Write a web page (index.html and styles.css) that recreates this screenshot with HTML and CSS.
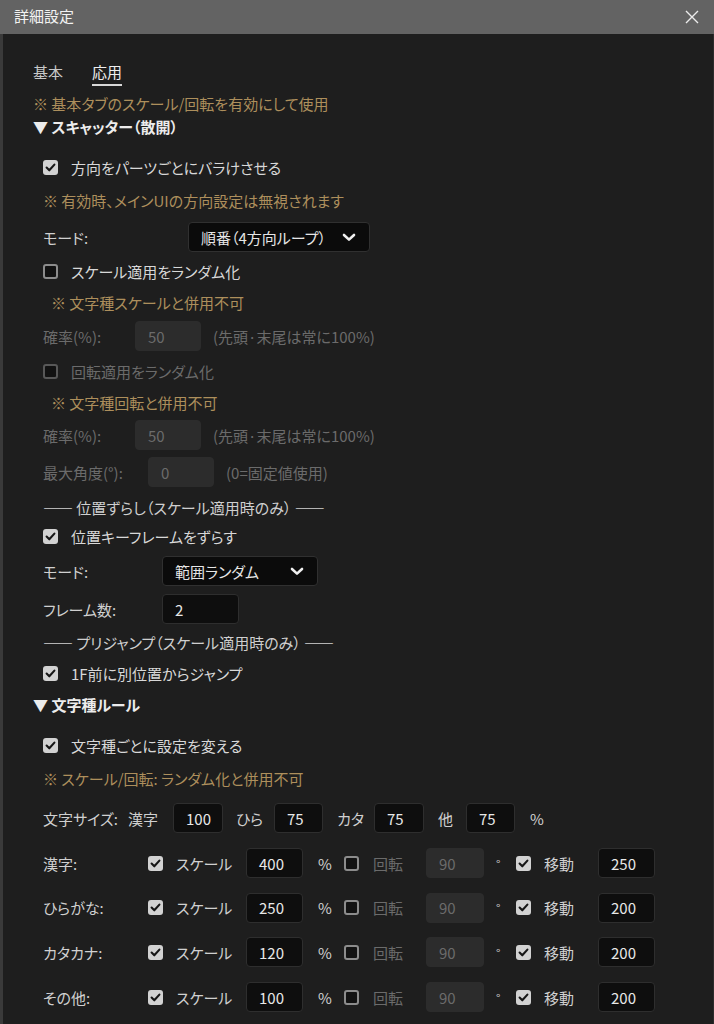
FILE: index.html
```html
<!DOCTYPE html>
<html lang="ja">
<head>
<meta charset="utf-8">
<title>詳細設定</title>
<link rel="stylesheet" href="styles.css">
</head>
<body>
<div class="window">
  <header class="titlebar">
    <span class="title">詳細設定</span>
    <span class="close" aria-label="閉じる">
      <svg width="16" height="16" viewBox="0 0 16 16"><path d="M2 2 L14 14 M14 2 L2 14" stroke="#ececec" stroke-width="1.4" fill="none"/></svg>
    </span>
  </header>
  <main class="content">
    <nav class="tabs">
      <span class="tab">基本</span>
      <span class="tab active">応用</span>
    </nav>
    <p class="note sp8">※ 基本タブのスケール/回転を有効にして使用</p>
    <h2 class="section sp3">▼ スキャッター（散開）</h2>

    <div class="group">
      <label class="row check sp20"><span class="cb on"><svg viewBox="0 0 15 15"><path d="M3.6 7.6 L6.3 10.3 L11.4 4.6"/></svg></span><span>方向をパーツごとにバラけさせる</span></label>
      <p class="note sp14">※ 有効時、メインUIの方向設定は無視されます</p>
      <div class="row field sp11">
        <span class="lab w145">モード:</span>
        <span class="select w182"><span>順番（4方向ループ）</span><svg width="14" height="9" viewBox="0 0 14 9"><path d="M2 2 L7 6.6 L12 2"/></svg></span>
      </div>
      <label class="row check sp9"><span class="cb"></span><span>スケール適用をランダム化</span></label>
      <p class="note sub sp12">※ 文字種スケールと併用不可</p>
      <div class="row field sp8 dis">
        <span class="lab w92">確率(%):</span>
        <span class="input off w66">50</span>
        <span class="hint">(先頭·末尾は常に100%)</span>
      </div>
      <label class="row check dis sp10"><span class="cb off"></span><span>回転適用をランダム化</span></label>
      <p class="note sub sp12">※ 文字種回転と併用不可</p>
      <div class="row field sp7 dis">
        <span class="lab w92">確率(%):</span>
        <span class="input off w66">50</span>
        <span class="hint">(先頭·末尾は常に100%)</span>
      </div>
      <div class="row field sp7 dis">
        <span class="lab w105">最大角度(°):</span>
        <span class="input off w66">0</span>
        <span class="hint">(0=固定値使用)</span>
      </div>
      <p class="row sep sp10">—— 位置ずらし（スケール適用時のみ） ——</p>
      <label class="row check sp9"><span class="cb on"><svg viewBox="0 0 15 15"><path d="M3.6 7.6 L6.3 10.3 L11.4 4.6"/></svg></span><span>位置キーフレームをずらす</span></label>
      <div class="row field sp10">
        <span class="lab w119">モード:</span>
        <span class="select w156"><span>範囲ランダム</span><svg width="14" height="9" viewBox="0 0 14 9"><path d="M2 2 L7 6.6 L12 2"/></svg></span>
      </div>
      <div class="row field sp8">
        <span class="lab w119">フレーム数:</span>
        <span class="input w77">2</span>
      </div>
      <p class="row sep sp8">—— プリジャンプ（スケール適用時のみ） ——</p>
      <label class="row check sp11"><span class="cb on"><svg viewBox="0 0 15 15"><path d="M3.6 7.6 L6.3 10.3 L11.4 4.6"/></svg></span><span>1F前に別位置からジャンプ</span></label>
    </div>

    <h2 class="section sp12">▼ 文字種ルール</h2>

    <div class="group">
      <label class="row check sp20"><span class="cb on"><svg viewBox="0 0 15 15"><path d="M3.6 7.6 L6.3 10.3 L11.4 4.6"/></svg></span><span>文字種ごとに設定を変える</span></label>
      <p class="note sp14">※ スケール/回転: ランダム化と併用不可</p>
      <div class="row field sizes sp14">
        <span class="lab w85">文字サイズ:</span>
        <span class="lab w45">漢字</span>
        <span class="input w50">100</span>
        <span class="lab pl13 w51">ひら</span>
        <span class="input w49">75</span>
        <span class="lab pl14 w51">カタ</span>
        <span class="input w50">75</span>
        <span class="lab pl14 w42">他</span>
        <span class="input w49">75</span>
        <span class="lab pl15">%</span>
      </div>

      <div class="table sp15">
        <span class="lab">漢字:</span>
        <span class="cb on"><svg viewBox="0 0 15 15"><path d="M3.6 7.6 L6.3 10.3 L11.4 4.6"/></svg></span>
        <span class="lab pl13">スケール</span>
        <span class="input">400</span>
        <span class="lab pl15">%</span>
        <span class="cb"></span>
        <span class="lab dim pl14">回転</span>
        <span class="input off">90</span>
        <span class="lab deg">°</span>
        <span class="cb on"><svg viewBox="0 0 15 15"><path d="M3.6 7.6 L6.3 10.3 L11.4 4.6"/></svg></span>
        <span class="lab pl13">移動</span>
        <span class="input">250</span>

        <span class="lab">ひらがな:</span>
        <span class="cb on"><svg viewBox="0 0 15 15"><path d="M3.6 7.6 L6.3 10.3 L11.4 4.6"/></svg></span>
        <span class="lab pl13">スケール</span>
        <span class="input">250</span>
        <span class="lab pl15">%</span>
        <span class="cb"></span>
        <span class="lab dim pl14">回転</span>
        <span class="input off">90</span>
        <span class="lab deg">°</span>
        <span class="cb on"><svg viewBox="0 0 15 15"><path d="M3.6 7.6 L6.3 10.3 L11.4 4.6"/></svg></span>
        <span class="lab pl13">移動</span>
        <span class="input">200</span>

        <span class="lab">カタカナ:</span>
        <span class="cb on"><svg viewBox="0 0 15 15"><path d="M3.6 7.6 L6.3 10.3 L11.4 4.6"/></svg></span>
        <span class="lab pl13">スケール</span>
        <span class="input">120</span>
        <span class="lab pl15">%</span>
        <span class="cb"></span>
        <span class="lab dim pl14">回転</span>
        <span class="input off">90</span>
        <span class="lab deg">°</span>
        <span class="cb on"><svg viewBox="0 0 15 15"><path d="M3.6 7.6 L6.3 10.3 L11.4 4.6"/></svg></span>
        <span class="lab pl13">移動</span>
        <span class="input">200</span>

        <span class="lab">その他:</span>
        <span class="cb on"><svg viewBox="0 0 15 15"><path d="M3.6 7.6 L6.3 10.3 L11.4 4.6"/></svg></span>
        <span class="lab pl13">スケール</span>
        <span class="input">100</span>
        <span class="lab pl15">%</span>
        <span class="cb"></span>
        <span class="lab dim pl14">回転</span>
        <span class="input off">90</span>
        <span class="lab deg">°</span>
        <span class="cb on"><svg viewBox="0 0 15 15"><path d="M3.6 7.6 L6.3 10.3 L11.4 4.6"/></svg></span>
        <span class="lab pl13">移動</span>
        <span class="input">200</span>
      </div>
    </div>
  </main>
</div>
</body>
</html>
```

FILE: styles.css
```css
* { box-sizing: border-box; }
html, body {
  margin: 0;
  padding: 0;
  background: #1e1e1e;
}
body {
  width: 714px;
  height: 1024px;
  overflow: hidden;
  font-family: "Noto Sans CJK JP", "Noto Sans", sans-serif;
  font-size: 15px;
  font-feature-settings: "palt";
  color: #d4d4d4;
}
.window {
  width: 714px;
  height: 1024px;
  display: flex;
  flex-direction: column;
  background: #1e1e1e;
}
.titlebar {
  height: 34px;
  flex: none;
  background: #636363;
  display: flex;
  align-items: center;
  justify-content: space-between;
  padding: 0 14px 0 14px;
}
.title {
  color: #f2f2f2;
  font-size: 15px;
  line-height: 34px;
  padding-bottom: 2px;
}
.close {
  display: flex;
  width: 16px;
  height: 16px;
  margin-right: 0;
}
.content {
  flex: 1;
  border-left: 3px solid #3a3a3a;
  border-right: 1px solid #2c2c2c;
  padding: 26px 0 0 30px;
  overflow: hidden;
}
.tabs {
  display: flex;
  gap: 29px;
  height: 26px;
}
.tab {
  height: 26px;
  line-height: 24px;
  color: #c8c8c8;
  border-bottom: 2px solid transparent;
}
.tab.active {
  color: #eeeeee;
  border-bottom-color: #d8d8d8;
}
p, h2 { margin: 0; }
.note {
  height: 20px;
  line-height: 20px;
  color: #ad8f5c;
}
.note.sub { padding-left: 8px; }
.section {
  height: 20px;
  line-height: 20px;
  font-size: 15px;
  font-weight: 700;
  color: #ececec;
}
.group { padding-left: 10px; }
.row {
  display: flex;
  align-items: center;
  height: 20px;
  white-space: nowrap;
}
.row.field { height: 30px; }
.check { gap: 13px; color: #d8d8d8; }
.check.dis { color: #6b6b6b; }
.dis .lab, .dis .hint { color: #6b6b6b; }
.sep { color: #cfcfcf; }

.cb {
  width: 15px;
  height: 15px;
  flex: none;
  border-radius: 3px;
  background: #121212;
  border: 2px solid #8c8c8c;
  display: block;
}
.cb.off { border-color: #585858; }
.cb.on {
  background: #d2d2d2;
  border: none;
}
.cb svg {
  display: block;
  width: 15px;
  height: 15px;
}
.cb svg path {
  fill: none;
  stroke: #161616;
  stroke-width: 2.1;
  stroke-linecap: round;
  stroke-linejoin: round;
}

.lab { flex: none; color: #d0d0d0; }
.lab.dim { color: #6b6b6b; }
.w42 { width: 42px; }
.w45 { width: 45px; }
.w51 { width: 51px; }
.w85 { width: 85px; }
.w92 { width: 92px; }
.w105 { width: 105px; }
.w119 { width: 119px; }
.w145 { width: 145px; }
.pl13 { padding-left: 13px; }
.pl14 { padding-left: 14px; }
.pl15 { padding-left: 15px; }

.select {
  height: 30px;
  background: #0b0b0b;
  border: 1px solid #303030;
  border-radius: 4px;
  display: flex;
  align-items: center;
  justify-content: space-between;
  padding: 0 13px 0 12px;
  color: #e6e6e6;
}
.select svg path {
  fill: none;
  stroke: #f0f0f0;
  stroke-width: 2.6;
  stroke-linecap: round;
  stroke-linejoin: round;
}
.w182 { width: 182px; }
.w156 { width: 156px; }

.input {
  height: 30px;
  flex: none;
  display: flex;
  align-items: center;
  padding-left: 12px;
  background: #0e0e0e;
  border: 1px solid #2e2e2e;
  border-radius: 4px;
  color: #e8e8e8;
}
.input.off {
  background: #2c2c2c;
  border-color: #2c2c2c;
  color: #6b6b6b;
}
.w49 { width: 49px; }
.w50 { width: 50px; }
.w66 { width: 66px; }
.w77 { width: 77px; }
.hint { margin-left: 12px; }

.table {
  display: grid;
  grid-template-columns: 105px 15px 83px 57px 41px 15px 67px 58px 32px 15px 67px 57px;
  grid-auto-rows: 30px;
  row-gap: 14.7px;
  align-items: center;
}
.table .lab, .table .input { white-space: nowrap; }
.deg { padding-left: 12px; color: #c8c8c8; font-size: 12px; }

.sp3 { margin-top: 3px; }
.sp7 { margin-top: 7px; }
.sp8 { margin-top: 8px; }
.sp9 { margin-top: 9px; }
.sp10 { margin-top: 10px; }
.sp11 { margin-top: 11px; }
.sp12 { margin-top: 12px; }
.sp14 { margin-top: 14px; }
.sp15 { margin-top: 15px; }
.sp20 { margin-top: 20px; }
```
